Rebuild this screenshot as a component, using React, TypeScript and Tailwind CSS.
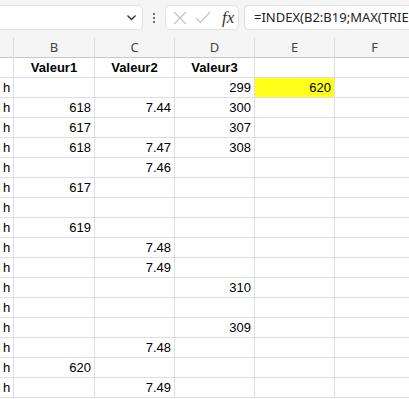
import React from 'react';

const COLS = ['', 'B', 'C', 'D', 'E', 'F'];

// each row: [A, B, C, D, E]
const ROWS: (string | null)[][] = [
  ['', 'Valeur1', 'Valeur2', 'Valeur3', ''],
  ['h', '', '', '299', '620'],
  ['h', '618', '7.44', '300', ''],
  ['h', '617', '', '307', ''],
  ['h', '618', '7.47', '308', ''],
  ['h', '', '7.46', '', ''],
  ['h', '617', '', '', ''],
  ['h', '', '', '', ''],
  ['h', '619', '', '', ''],
  ['h', '', '7.48', '', ''],
  ['h', '', '7.49', '', ''],
  ['h', '', '', '310', ''],
  ['h', '', '', '', ''],
  ['h', '', '', '309', ''],
  ['h', '', '7.48', '', ''],
  ['h', '620', '', '', ''],
  ['h', '', '7.49', '', ''],
];

const GRID = 'grid grid-cols-[14px_81px_80px_80px_80px_80px]';

const App: React.FC = () => {
  return (
    <div className="w-[409px] h-[399px] overflow-hidden bg-white" style={{ fontFamily: '"Liberation Sans", Arial, sans-serif' }}>
      {/* formula bar */}
      <div className="h-[38px] bg-[#f5f5f5] flex items-start pt-[5px] gap-0">
        <div className="w-[143px] h-[25px] bg-white border border-[#e1e1e1] rounded-r-[5px] border-l-0 flex items-center justify-end pr-[5px]">
          <svg width="11" height="7" viewBox="0 0 11 7" fill="none" stroke="#333" strokeWidth="1.4">
            <path d="M1.5 1.5 L5.5 5.5 L9.5 1.5" />
          </svg>
        </div>
        <div className="w-[22px] h-[25px] flex flex-col items-center justify-center gap-[2px]">
          <span className="w-[2px] h-[2px] bg-[#444] rounded-full" />
          <span className="w-[2px] h-[2px] bg-[#444] rounded-full" />
          <span className="w-[2px] h-[2px] bg-[#444] rounded-full" />
        </div>
        <div className="w-[74px] h-[25px] bg-white border border-[#e1e1e1] rounded-[5px] flex items-center">
          <svg className="ml-[7px]" width="14" height="14" viewBox="0 0 14 14" stroke="#c2c2c2" strokeWidth="1.2">
            <path d="M1 1 L13 13 M13 1 L1 13" />
          </svg>
          <svg className="ml-[8px]" width="16" height="13" viewBox="0 0 16 13" fill="none" stroke="#c2c2c2" strokeWidth="1.2">
            <path d="M1 7 L5.5 11.5 L15 1" />
          </svg>
          <span className="ml-[11px] text-[17px] italic text-[#333] leading-none" style={{ fontFamily: '"Liberation Serif", serif' }}>fx</span>
        </div>
        <div className="ml-[5px] flex-1 h-[25px] bg-white border border-[#e1e1e1] border-r-0 rounded-l-[5px] flex items-center pl-[9px] overflow-hidden">
          <span className="text-[13px] text-[#222] whitespace-nowrap" style={{ fontFamily: '"Noto Sans", sans-serif' }}>=INDEX(B2:B19;MAX(TRIE</span>
        </div>
      </div>

      {/* column headers */}
      <div className={`${GRID} h-[20px] bg-[#f5f5f5] border-b border-[#c8c8c8]`}>
        {COLS.map((c, i) => (
          <div key={i} className="border-r border-[#dcdcdc] flex items-center justify-center text-[13px] text-[#444]" style={{ fontFamily: '"Noto Sans", sans-serif' }}>
            {c}
          </div>
        ))}
      </div>

      {/* cells */}
      {ROWS.map((row, r) => (
        <div key={r} className={`${GRID} h-[20px]`}>
          {row.map((v, c) => {
            const header = r === 0;
            const yellow = r === 1 && c === 4;
            return (
              <div
                key={c}
                className={`border-r border-b border-[#dedede] flex items-center text-[13px] text-black overflow-hidden whitespace-nowrap ${
                  c === 0 ? 'justify-start pl-[3px]' : header ? 'justify-center font-bold' : 'justify-end pr-[3px]'
                } ${yellow ? 'bg-[#ffff1a]' : ''}`}
              >
                {v}
              </div>
            );
          })}
          <div className="border-b border-[#dedede]" />
        </div>
      ))}
    </div>
  );
};

export default App;
